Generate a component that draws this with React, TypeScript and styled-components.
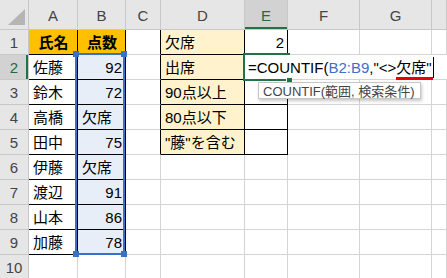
import React from "react";
import styled, { createGlobalStyle, css } from "styled-components";

const GlobalStyle = createGlobalStyle`
  html, body { margin: 0; padding: 0; background: #fff; }
  body { font-family: "Liberation Sans", "Noto Sans CJK JP", sans-serif; }
`;

const GREEN = "#217346";
const BLUE = "#3a70c8";
const ORANGE = "#ffc000";
const CREAM = "#fff2cc";
const PICKED = "#e8eef8";
const GRID = "#d4d4d4";

type Align = "left" | "right" | "center";

type CellSpec = {
  t?: string;
  fill?: string;
  align?: Align;
  bold?: boolean;
  r?: boolean;
  b?: boolean;
};

const Sheet = styled.div`
  position: relative;
  display: grid;
  grid-template-columns: 29px 49px 48px 35px 84px 43px 72px 72px 1fr;
  grid-template-rows: 30px repeat(10, 25px);
  width: 447px;
  height: 278px;
  overflow: hidden;
  background: #fff;
  font-family: "Liberation Sans", "Noto Sans CJK JP", sans-serif;
  font-size: 15px;
  color: #000;
`;

/* Every grid item sits on its own row/column so the overlays can share tracks */
const placed = css<{ $row: number; $col: number }>`
  grid-row: ${(p) => p.$row};
  grid-column: ${(p) => p.$col};
`;

const headerBase = css`
  box-sizing: border-box;
  display: flex;
  align-items: center;
  justify-content: center;
  background: #e6e6e6;
  color: #444;
  border-right: 1px solid #c8c8c8;
  border-bottom: 1px solid #c8c8c8;
  line-height: 1;
`;

const Corner = styled.div`
  ${headerBase};
  grid-row: 1;
  grid-column: 1;
  align-items: flex-end;
  justify-content: flex-end;
  padding: 0 3px 4px 0;
`;

const ColHeader = styled.div<{ $row: number; $col: number; $active?: boolean }>`
  ${headerBase};
  ${placed};
  padding-top: 2px;
  ${(p) =>
    p.$active &&
    css`
      background: #d2d2d2;
      color: #1e6b41;
      box-shadow: inset 0 -2px 0 ${GREEN};
    `}
`;

const RowHeader = styled.div<{ $row: number; $col: number; $active?: boolean }>`
  ${headerBase};
  ${placed};
  ${(p) =>
    p.$active &&
    css`
      background: #d2d2d2;
      color: #1e6b41;
      box-shadow: inset -2px 0 0 ${GREEN};
    `}
`;

const Cell = styled.div<{
  $row: number;
  $col: number;
  $fill?: string;
  $align?: Align;
  $bold?: boolean;
  $right?: boolean;
  $bottom?: boolean;
}>`
  ${placed};
  box-sizing: border-box;
  display: flex;
  align-items: center;
  justify-content: ${(p) =>
    p.$align === "right" ? "flex-end" : p.$align === "center" ? "center" : "flex-start"};
  padding: 1px 3px 0 4px;
  background: ${(p) => p.$fill ?? "#fff"};
  font-weight: ${(p) => (p.$bold ? 700 : 400)};
  border-right: 1px solid ${(p) => (p.$right ? "#000" : GRID)};
  border-bottom: 1px solid ${(p) => (p.$bottom ? "#000" : GRID)};
  white-space: nowrap;
  overflow: hidden;
  line-height: 1;
`;

/* Range selection frame around B2:B9 */
const Selection = styled.div`
  grid-column: 3;
  grid-row: 3 / 11;
  margin: -2px 1px 0 -3px;
  border: 2px solid ${BLUE};
  position: relative;
  z-index: 3;
  pointer-events: none;
`;

const Grip = styled.span<{ $x: "left" | "right"; $y: "top" | "bottom" }>`
  position: absolute;
  width: 6px;
  height: 6px;
  background: ${BLUE};
  ${(p) => p.$x}: -4px;
  ${(p) => p.$y}: -4px;
`;

/* In-cell editor: the formula spills over F2:H2 on a white strip */
const Editor = styled.div`
  grid-column: 6 / 10;
  grid-row: 3;
  margin-bottom: 1px;
  background: #fff;
  z-index: 2;
  display: flex;
  align-items: center;
  padding: 1px 0 0 3px;
  white-space: nowrap;
  line-height: 1;
`;

const RangeRef = styled.span`
  color: ${BLUE};
`;

const Composing = styled.span`
  position: relative;
  &::after {
    content: "";
    position: absolute;
    left: 0;
    right: -1px;
    bottom: -5px;
    height: 3px;
    background: #e60000;
  }
`;

const Caret = styled.span`
  display: inline-block;
  width: 1px;
  height: 21px;
  margin-left: 1px;
  background: #000;
`;

/* Active cell outline on E2 (right side is open while editing) */
const ActiveCell = styled.div`
  grid-column: 6;
  grid-row: 3;
  margin: -2px -2px -1px -2px;
  border: 2px solid ${GREEN};
  border-right: none;
  position: relative;
  z-index: 4;
  pointer-events: none;
`;

const FillHandle = styled.span`
  position: absolute;
  right: -2px;
  bottom: -4px;
  width: 5px;
  height: 5px;
  background: ${GREEN};
  border-left: 1px solid #fff;
`;

const Tooltip = styled.div`
  position: absolute;
  left: 258px;
  top: 82px;
  box-sizing: border-box;
  height: 17px;
  padding: 1px 5px 0 4px;
  display: flex;
  align-items: center;
  background: #fff;
  border: 1px solid #c6c6c6;
  box-shadow: 1px 2px 3px rgba(0, 0, 0, 0.22);
  color: #444;
  font-size: 13px;
  line-height: 1;
  white-space: nowrap;
  z-index: 5;
`;

const letters = ["A", "B", "C", "D", "E", "F", "G", ""];
const names = ["佐藤", "鈴木", "高橋", "田中", "伊藤", "渡辺", "山本", "加藤"];
const scores = ["92", "72", "欠席", "75", "欠席", "91", "86", "78"];
const labels = ["欠席", "出席", "90点以上", "80点以下", "\"藤\"を含む"];

function rowCells(r: number): CellSpec[] {
  const inList = r >= 2 && r <= 9;
  const inSummary = r <= 5;
  const A: CellSpec =
    r === 1
      ? { t: "氏名", fill: ORANGE, bold: true, align: "center", r: true, b: true }
      : inList
      ? { t: names[r - 2], r: true, b: true }
      : {};
  const score = inList ? scores[r - 2] : "";
  const B: CellSpec =
    r === 1
      ? { t: "点数", fill: ORANGE, bold: true, align: "center", r: true, b: true }
      : inList
      ? { t: score, fill: PICKED, align: /^\d+$/.test(score) ? "right" : "left", r: true, b: true }
      : {};
  const C: CellSpec = inSummary ? { r: true } : {};
  const D: CellSpec = inSummary ? { t: labels[r - 1], fill: CREAM, r: true, b: true } : {};
  const E: CellSpec = inSummary ? { t: r === 1 ? "2" : "", align: "right", r: true, b: true } : {};
  return [A, B, C, D, E, {}, {}, {}];
}

export default function App() {
  const rows = Array.from({ length: 10 }, (_, i) => i + 1);
  return (
    <>
      <GlobalStyle />
      <Sheet>
        <Corner>
          <svg width="17" height="16" viewBox="0 0 17 16">
            <polygon points="17,0 17,16 0,16" fill="#b5b5b5" />
          </svg>
        </Corner>
        {letters.map((l, i) => (
          <ColHeader key={`h${i}`} $row={1} $col={i + 2} $active={l === "E"}>
            {l}
          </ColHeader>
        ))}
        {rows.map((r) => (
          <React.Fragment key={r}>
            <RowHeader $row={r + 1} $col={1} $active={r === 2}>
              {r}
            </RowHeader>
            {rowCells(r).map((c, j) => (
              <Cell
                key={j}
                $row={r + 1}
                $col={j + 2}
                $fill={c.fill}
                $align={c.align}
                $bold={c.bold}
                $right={c.r}
                $bottom={c.b}
              >
                {c.t}
              </Cell>
            ))}
          </React.Fragment>
        ))}
        <Editor>
          =COUNTIF(<RangeRef>B2:B9</RangeRef>,"&lt;&gt;<Composing>欠席"</Composing>
          <Caret />
        </Editor>
        <ActiveCell>
          <FillHandle />
        </ActiveCell>
        <Selection>
          <Grip $x="left" $y="top" />
          <Grip $x="right" $y="top" />
          <Grip $x="left" $y="bottom" />
          <Grip $x="right" $y="bottom" />
        </Selection>
        <Tooltip>COUNTIF(範囲, 検索条件)</Tooltip>
      </Sheet>
    </>
  );
}
